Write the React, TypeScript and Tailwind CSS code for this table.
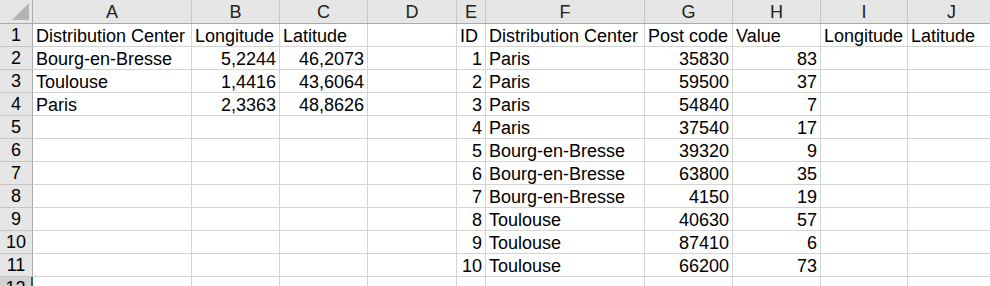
import React from "react";

type Cell = { v: string; num?: boolean };

const COLS = [
  { key: "A", w: 159 },
  { key: "B", w: 88 },
  { key: "C", w: 88 },
  { key: "D", w: 89 },
  { key: "E", w: 29 },
  { key: "F", w: 159 },
  { key: "G", w: 88 },
  { key: "H", w: 88 },
  { key: "I", w: 87 },
  { key: "J", w: 88 },
];

const t = (v: string): Cell => ({ v });
const n = (v: string | number): Cell => ({ v: String(v), num: true });
const e: Cell = { v: "" };

const orders: [number, string, number, number][] = [
  [1, "Paris", 35830, 83],
  [2, "Paris", 59500, 37],
  [3, "Paris", 54840, 7],
  [4, "Paris", 37540, 17],
  [5, "Bourg-en-Bresse", 39320, 9],
  [6, "Bourg-en-Bresse", 63800, 35],
  [7, "Bourg-en-Bresse", 4150, 19],
  [8, "Toulouse", 40630, 57],
  [9, "Toulouse", 87410, 6],
  [10, "Toulouse", 66200, 73],
];

const centers: Cell[][] = [
  [t("Bourg-en-Bresse"), n("5,2244"), n("46,2073")],
  [t("Toulouse"), n("1,4416"), n("43,6064")],
  [t("Paris"), n("2,3363"), n("48,8626")],
];

const rows: Cell[][] = [
  [t("Distribution Center"), t("Longitude"), t("Latitude"), e, t("ID"), t("Distribution Center"), t("Post code"), t("Value"), t("Longitude"), t("Latitude")],
  ...orders.map(([id, city, code, value], i) => [
    ...(centers[i] ?? [e, e, e]),
    e,
    n(id),
    t(city),
    n(code),
    n(value),
    e,
    e,
  ]),
  COLS.map(() => e),
];

export default function App() {
  return (
    <div
      className="w-[990px] h-[286px] overflow-hidden bg-white text-[18px] leading-none text-black"
      style={{ fontFamily: "Arial, 'Liberation Sans', sans-serif" }}
    >
      {/* column headers */}
      <div className="flex h-[24px] bg-[#e6e6e6] border-b border-[#ababab]">
        <div className="relative w-[33px] shrink-0 border-r border-[#ababab]">
          <div className="absolute right-[3px] bottom-[3px] w-0 h-0 border-l-[17px] border-l-transparent border-b-[17px] border-b-[#b4b4b4]" />
        </div>
        {COLS.map((c) => (
          <div
            key={c.key}
            style={{ width: c.w }}
            className="shrink-0 flex items-center justify-center border-r border-[#c6c6c6] text-[#222]"
          >
            {c.key}
          </div>
        ))}
      </div>

      {rows.map((row, ri) => {
        const last = ri === rows.length - 1;
        return (
          <div key={ri} className="flex h-[23px]">
            <div
              className={
                "w-[33px] shrink-0 flex items-center justify-center border-b border-[#c6c6c6] " +
                (last
                  ? "bg-[#d2d2d2] border-r-2 border-r-[#217346]"
                  : "bg-[#e6e6e6] border-r border-r-[#ababab]")
              }
            >
              {ri + 1}
            </div>
            {row.map((cell, ci) => (
              <div
                key={ci}
                style={{ width: COLS[ci].w }}
                className={
                  "shrink-0 flex items-center px-[3px] pt-[1px] whitespace-nowrap overflow-visible border-r border-b border-[#d4d4d4] " +
                  (cell.num ? "justify-end" : "justify-start")
                }
              >
                {cell.v}
              </div>
            ))}
          </div>
        );
      })}
    </div>
  );
}
